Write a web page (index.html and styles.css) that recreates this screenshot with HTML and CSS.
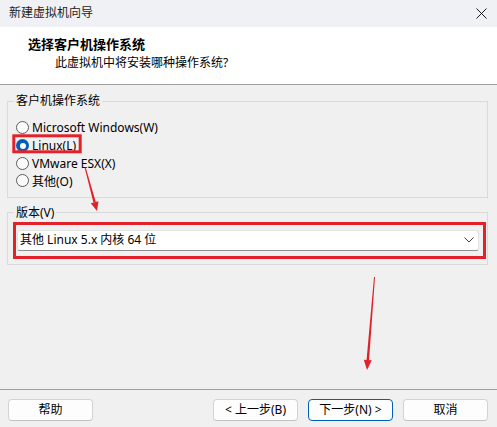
FILE: index.html
```html
<!DOCTYPE html>
<html lang="zh-CN">
<head>
<meta charset="utf-8">
<title>新建虚拟机向导</title>
<link rel="stylesheet" href="styles.css">
</head>
<body>
<div class="window">
  <div class="titlebar">
    <span class="title">新建虚拟机向导</span>
    <svg class="close" width="11" height="11" viewBox="0 0 11 11" aria-hidden="true">
      <path d="M0.5 0.5 L10.5 10.5 M10.5 0.5 L0.5 10.5" stroke="#1a1a1a" stroke-width="1" fill="none"/>
    </svg>
  </div>

  <div class="header">
    <div class="heading">选择客户机操作系统</div>
    <div class="subheading">此虚拟机中将安装哪种操作系统?</div>
  </div>

  <div class="content">
    <fieldset class="group os-group">
      <legend>客户机操作系统</legend>
      <label class="radio"><span class="radio-mark"></span>Microsoft Windows(W)</label>
      <label class="radio checked"><span class="radio-mark"></span>Linux(L)</label>
      <label class="radio"><span class="radio-mark"></span>VMware ESX(X)</label>
      <label class="radio"><span class="radio-mark"></span>其他(O)</label>
    </fieldset>

    <fieldset class="group version-group">
      <legend>版本(V)</legend>
      <div class="select">
        <span class="select-value">其他 Linux 5.x 内核 64 位</span>
        <svg class="chevron" width="10" height="6" viewBox="0 0 10 6" aria-hidden="true">
          <path d="M0.5 0.5 L5 5 L9.5 0.5" stroke="#404040" stroke-width="1" fill="none"/>
        </svg>
      </div>
    </fieldset>
  </div>

  <div class="footer">
    <button class="btn">帮助</button>
    <div class="nav-buttons">
      <button class="btn">&lt; 上一步(B)</button>
      <button class="btn btn-default">下一步(N) &gt;</button>
      <button class="btn">取消</button>
    </div>
  </div>

  <!-- red callouts drawn over the dialog -->
  <svg class="annotations" width="497" height="427" viewBox="0 0 497 427" aria-hidden="true">
    <g fill="none" stroke="#e1222b" stroke-width="3">
      <rect x="13.8" y="135.8" width="66.4" height="16"/>
      <rect x="14.5" y="223.5" width="470" height="34"/>
    </g>
    <g fill="#e1222b">
      <polygon points="85.48,166.87 84.52,167.13 93.47,202.63 95.79,201.99"/>
      <polygon points="98.49,201.26 90.77,203.36 97,211"/>
      <polygon points="375,277.04 374,276.96 366.55,359.9 369.05,360.1"/>
      <polygon points="371.8,360.3 363.8,359.7 367,370"/>
    </g>
  </svg>
</div>
</body>
</html>
```

FILE: styles.css
```css
* {
  box-sizing: border-box;
}

html, body {
  margin: 0;
  padding: 0;
}

body {
  font-family: "Noto Sans", "Noto Sans CJK SC", sans-serif;
  font-size: 12px;
  color: #000;
  background: #f0f0f0;
}

.window {
  position: relative;
  width: 497px;
  height: 427px;
  display: flex;
  flex-direction: column;
  background: #f0f0f0;
  overflow: hidden;
}

/* title bar */
.titlebar {
  height: 27px;
  flex: none;
  display: flex;
  align-items: center;
  justify-content: space-between;
  padding: 0 10px 2px 9px;
  background: #eff1f4;
}

.title {
  font-size: 12px;
  line-height: 16px;
  color: #1a1a1a;
}

.close {
  display: block;
  margin-top: 1px;
}

/* white page header */
.header {
  height: 58px;
  flex: none;
  background: #fff;
  border-bottom: 1px solid #a0a0a0;
  padding-top: 8px;
}

.heading {
  font-weight: bold;
  font-size: 13px;
  line-height: 18px;
  padding-left: 28px;
}

.subheading {
  font-size: 12px;
  line-height: 16px;
  padding-left: 55px;
  margin-top: 2px;
}

/* body */
.content {
  flex: 1;
  padding: 8px 9px 0 7px;
}

.group {
  margin: 0;
  border: 1px solid #dadada;
  padding: 0 6px 7px 6px;
  min-width: 0;
}

.group legend {
  padding: 0 2px;
  line-height: 16px;
  font-size: 12px;
  color: #000;
}

.os-group {
  padding-top: 10px;
}

.radio {
  display: flex;
  align-items: center;
  height: 17.7px;
  padding-left: 2px;
  font-size: 12px;
  white-space: nowrap;
}

.radio-mark {
  width: 13px;
  height: 13px;
  border-radius: 50%;
  border: 1px solid #5c5c5c;
  background: #fbfbfb;
  margin-right: 3px;
  flex: none;
  position: relative;
}

.radio.checked .radio-mark {
  border: none;
  background: #005fb8;
}

.radio.checked .radio-mark::after {
  content: "";
  position: absolute;
  left: 3.5px;
  top: 3.5px;
  width: 6px;
  height: 6px;
  border-radius: 50%;
  background: #fff;
}

.version-group {
  margin-top: 7px;
  padding-top: 9px;
  padding-bottom: 13px;
}

.select {
  height: 21px;
  margin: 0 2px 0 3px;
  display: flex;
  align-items: center;
  justify-content: space-between;
  background: #fff;
  border: 1px solid #e3e3e3;
  border-bottom-color: #8e8e8e;
  border-radius: 3px;
  padding: 0 4px 0 2px;
}

.select-value {
  line-height: 16px;
}

.chevron {
  display: block;
}

/* bottom button row */
.footer {
  height: 38px;
  flex: none;
  border-top: 1px solid #a0a0a0;
  display: flex;
  align-items: flex-start;
  justify-content: space-between;
  padding: 9px 9px 0 8px;
}

.nav-buttons {
  display: flex;
  gap: 10px;
}

.btn {
  width: 85px;
  height: 22px;
  font-family: inherit;
  font-size: 12px;
  line-height: 16px;
  color: #000;
  background: #fdfdfd;
  border: 1px solid #d3d3d3;
  border-bottom-color: #c2c2c2;
  border-radius: 4px;
  padding: 0;
}

.btn-default {
  border: 1px solid #005fb8;
}

.annotations {
  position: absolute;
  left: 0;
  top: 0;
  pointer-events: none;
}
```
